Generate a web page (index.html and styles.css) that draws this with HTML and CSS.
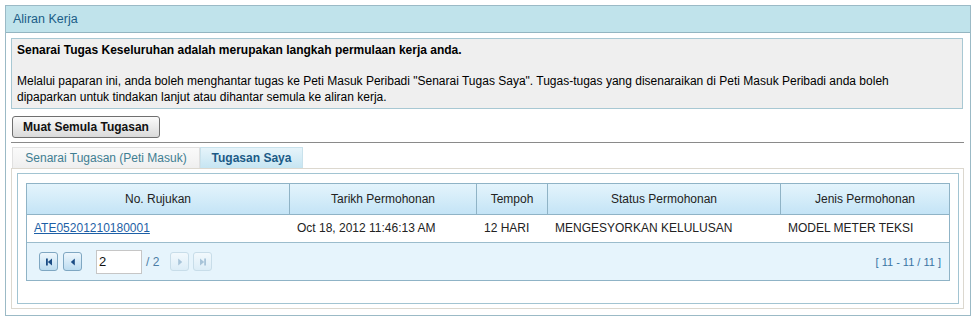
FILE: index.html
```html
<!DOCTYPE html>
<html>
<head>
  <title>Aliran Kerja</title>
  <link rel="stylesheet" href="styles.css">
</head>
<body>
  <div class="panel">
    <div class="panel-head">Aliran Kerja</div>
    <div class="panel-body">

      <div class="info">
        <p class="lead">Senarai Tugas Keseluruhan adalah merupakan langkah permulaan kerja anda.</p>
        <p class="desc">Melalui paparan ini, anda boleh menghantar tugas ke Peti Masuk Peribadi "Senarai Tugas Saya". Tugas-tugas yang disenaraikan di Peti Masuk Peribadi anda boleh dipaparkan untuk tindakan lanjut atau dihantar semula ke aliran kerja.</p>
      </div>

      <button class="reload-btn">Muat Semula Tugasan</button>
      <div class="divider"></div>

      <div class="tabs">
        <div class="tab">Senarai Tugasan (Peti Masuk)</div>
        <div class="tab active">Tugasan Saya</div>
      </div>

      <div class="tab-panel">
        <div class="tab-inner">
          <div class="grid">
            <div class="grid-head">
              <div class="col c1">No. Rujukan</div>
              <div class="col c2">Tarikh Permohonan</div>
              <div class="col c3">Tempoh</div>
              <div class="col c4">Status Permohonan</div>
              <div class="col c5">Jenis Permohonan</div>
            </div>
            <div class="grid-row">
              <div class="col c1"><a href="#">ATE05201210180001</a></div>
              <div class="col c2">Oct 18, 2012 11:46:13 AM</div>
              <div class="col c3">12 HARI</div>
              <div class="col c4">MENGESYORKAN KELULUSAN</div>
              <div class="col c5">MODEL METER TEKSI</div>
            </div>
            <div class="pager">
              <div class="pager-left">
                <span class="pg-btn">
                  <svg width="10" height="10" viewBox="0 0 10 10"><rect x="2" y="1.5" width="1.8" height="7" fill="#1b4c84"/><path d="M8 1.5 L3.8 5 L8 8.5 Z" fill="#1b4c84"/></svg>
                </span>
                <span class="pg-btn">
                  <svg width="10" height="10" viewBox="0 0 10 10"><path d="M6.8 1.5 L2.8 5 L6.8 8.5 Z" fill="#1b4c84"/></svg>
                </span>
                <input class="pg-input" type="text" value="2">
                <span class="pg-total">/ 2</span>
                <span class="pg-btn off">
                  <svg width="10" height="10" viewBox="0 0 10 10"><path d="M3.2 1.5 L7.2 5 L3.2 8.5 Z" fill="#a8c4d9"/></svg>
                </span>
                <span class="pg-btn off">
                  <svg width="10" height="10" viewBox="0 0 10 10"><path d="M2 1.5 L6.2 5 L2 8.5 Z" fill="#a8c4d9"/><rect x="6.2" y="1.5" width="1.8" height="7" fill="#a8c4d9"/></svg>
                </span>
              </div>
              <div class="pager-info">[ 11 - 11 / 11 ]</div>
            </div>
          </div>
        </div>
      </div>

    </div>
  </div>
</body>
</html>
```

FILE: styles.css
```css
* {
  box-sizing: border-box;
}

body {
  margin: 0;
  padding: 5px;
  background: #fff;
  font-family: "Liberation Sans", Arial, sans-serif;
  font-size: 12px;
  color: #000;
}

/* Outer panel */
.panel {
  width: 966px;
  height: 311px;
  border: 1px solid #9bbac6;
}

.panel-head {
  height: 27px;
  line-height: 27px;
  padding-left: 7px;
  background: #c0e3eb;
  border-bottom: 1px solid #93b5c1;
  color: #1a5d87;
  font-size: 12.5px;
}

.panel-body {
  padding: 5px 6px 0 5px;
}

/* Info box */
.info {
  margin-right: 1px;
  background: #efefef;
  border: 1px solid #a8c8d3;
  padding: 3px 6px 3px 5px;
  line-height: 16px;
}

.info p {
  margin: 0;
}

.info .lead {
  font-weight: bold;
  margin-bottom: 15px;
}

.info .desc {
  max-width: 885px;
}

/* Reload button */
.reload-btn {
  display: block;
  margin: 7px 0 0 1px;
  height: 22px;
  width: 148px;
  padding: 0;
  border: 1px solid #6f6f6f;
  border-radius: 3px;
  background: linear-gradient(#fbfbfb, #dadada);
  font-family: "Liberation Sans", Arial, sans-serif;
  font-size: 12px;
  font-weight: bold;
  color: #111;
}

.divider {
  margin-top: 4px;
  border-top: 1px solid #8a8a8a;
}

/* Tabs */
.tabs {
  display: flex;
  margin: 4px 0 0 1px;
}

.tab {
  height: 21px;
  line-height: 21px;
  width: 188px;
  text-align: center;
  border: 1px solid #e0e0e0;
  border-bottom: none;
  background: linear-gradient(#fafafa, #efefef);
  color: #3f7e92;
}

.tab.active {
  width: 103px;
  border-color: #c9e2ec;
  background: linear-gradient(#e6f4fa, #c6e5f2);
  color: #1b5a86;
  font-weight: bold;
}

/* Tab panel */
.tab-panel {
  width: 953px;
  height: 141px;
  border: 1px solid #dcd8cf;
  padding: 4px 0 0 5px;
}

.tab-inner {
  width: 942px;
  height: 131px;
  border: 1px solid #a2c4d2;
  padding: 9px 0 0 8px;
}

/* Grid */
.grid {
  width: 924px;
  border: 1px solid #8fb3c6;
}

.grid-head,
.grid-row {
  display: flex;
}

.grid-head {
  height: 31px;
  background: linear-gradient(#e4f4fc, #c4e4f6);
  border-bottom: 1px solid #8fb3c6;
}

.grid-head .col {
  line-height: 30px;
  text-align: center;
  border-right: 1px solid #8fb3c6;
  color: #222;
}

.grid-head .col:last-child {
  border-right: none;
}

.grid-row {
  height: 28px;
  background: #fff;
  border-bottom: 1px solid #9bbccc;
}

.grid-row .col {
  line-height: 27px;
  padding-left: 7px;
  color: #222;
}

.c1 { width: 263px; }
.c2 { width: 187px; }
.c3 { width: 71px; }
.c4 { width: 233px; }
.c5 { flex: 1; }

.grid-row a {
  color: #1d5fa6;
}

/* Pager */
.pager {
  height: 37px;
  background: #e6f4fc;
  display: flex;
  align-items: center;
  justify-content: space-between;
  padding: 0 8px 0 12px;
}

.pager-left {
  display: flex;
  align-items: center;
}

.pg-btn {
  width: 19px;
  height: 19px;
  border: 1px solid #7fa7c2;
  border-radius: 3px;
  background: linear-gradient(#eef7fd, #bcdcf0);
  display: flex;
  align-items: center;
  justify-content: center;
  margin-right: 5px;
}

.pg-btn.off {
  border-color: #c8dde9;
  background: linear-gradient(#f2f9fd, #dcedf7);
  margin-right: 4px;
}

.pg-input {
  width: 46px;
  height: 24px;
  margin: 0 4px 0 9px;
  padding: 0 0 0 2px;
  border: 1px solid #c6c6c6;
  font-family: "Liberation Sans", Arial, sans-serif;
  font-size: 13px;
  color: #111;
}

.pg-total {
  color: #4b7ea5;
  margin-right: 11px;
}

.pager-info {
  color: #3a74a3;
  font-size: 11px;
}
```
